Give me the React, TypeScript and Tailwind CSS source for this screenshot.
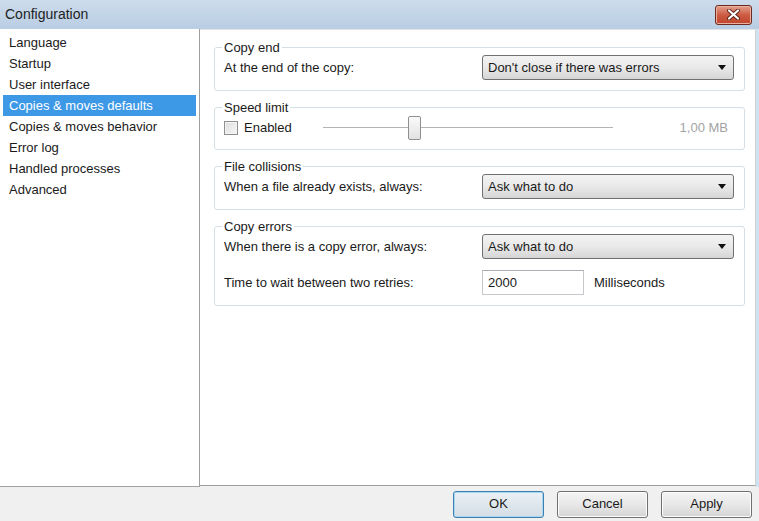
import { ReactNode } from "react";

const sections = [
  "Language",
  "Startup",
  "User interface",
  "Copies & moves defaults",
  "Copies & moves behavior",
  "Error log",
  "Handled processes",
  "Advanced",
];

function GroupBox({ title, children, className = "" }: { title: string; children: ReactNode; className?: string }) {
  return (
    <fieldset className={`rounded-[3px] border border-[#d5dfe5] px-[9px] ${className}`}>
      <legend className="-ml-[2px] px-[2px] leading-[15px]">{title}</legend>
      {children}
    </fieldset>
  );
}

function Combo({ value }: { value: string }) {
  return (
    <div className="flex h-[25px] w-[252px] items-center justify-between rounded-[3px] border border-[#707070] bg-gradient-to-b from-[#f3f3f3] via-[#e9e9e9] to-[#d6d6d6] pl-[5px] pr-[7px]">
      <span>{value}</span>
      <svg width="8" height="5" viewBox="0 0 8 5">
        <path d="M0 0H8L4 5Z" fill="#111" />
      </svg>
    </div>
  );
}

function Button({ label, focused }: { label: string; focused?: boolean }) {
  return (
    <div
      className={`flex h-[27px] w-[91px] items-center justify-center rounded-[3px] border ${
        focused
          ? "border-[#3c7fb1] bg-gradient-to-b from-[#eaf1f6] to-[#d3dde4] shadow-[inset_0_0_0_1px_#a9d6f0]"
          : "border-[#707070] bg-gradient-to-b from-[#f4f4f4] via-[#e8e8e8] to-[#d4d4d4] shadow-[inset_0_0_0_1px_#fcfcfc]"
      }`}
    >
      {label}
    </div>
  );
}

export default function App() {
  return (
    <div className="flex h-[521px] w-[759px] flex-col overflow-hidden bg-[#f0f0f0] font-['Liberation_Sans',Arial,sans-serif] text-[13px] text-[#1a1a1a]">
      {/* title bar */}
      <div className="flex h-[29px] items-center justify-between bg-gradient-to-b from-[#cddcec] to-[#b9cde3] pl-[5px] pr-[7px]">
        <span className="text-[14px] text-[#1e1e1e]">Configuration</span>
        <div className="flex h-[20px] w-[37px] items-center justify-center rounded-[3px] border border-[#6d2a1e] bg-gradient-to-b from-[#e3a08e] via-[#cd5a42] to-[#c0452c] shadow-[inset_0_0_0_1px_#eab0a0]">
          <svg width="13" height="11" viewBox="0 0 13 11">
            <path d="M2 1.5L11 9.5M11 1.5L2 9.5" stroke="#5a2418" strokeWidth="4" strokeLinecap="round" />
            <path d="M2 1.5L11 9.5M11 1.5L2 9.5" stroke="#fff" strokeWidth="2.2" strokeLinecap="round" />
          </svg>
        </div>
      </div>

      <div className="flex h-[458px]">
        {/* section list */}
        <div className="w-[200px] border-r border-b border-[#a0a0a0] bg-white pt-[3px]">
          {sections.map((s, i) => (
            <div
              key={s}
              className={`mx-[3px] h-[21px] pl-[6px] leading-[21px] ${i === 3 ? "bg-[#3d98e6] text-white" : ""}`}
            >
              {s}
            </div>
          ))}
        </div>

        {/* settings panel */}
        <div className="mb-[1px] flex w-[556px] flex-col gap-[9px] border-t border-r border-b border-t-[#e3e3e3] border-r-[#d2d2d2] border-b-[#a0a0a0] bg-white pl-[14px] pr-[10px] pt-[10px]">
          <GroupBox title="Copy end" className="pb-[10px]">
            <div className="flex items-center">
              <span className="w-[258px]">At the end of the copy:</span>
              <Combo value="Don't close if there was errors" />
            </div>
          </GroupBox>

          <GroupBox title="Speed limit" className="pb-[8px]">
            <div className="flex h-[26px] items-center">
              <div className="flex w-[99px] items-center">
                <div className="h-[14px] w-[14px] border border-[#8e8f8f] bg-gradient-to-br from-[#dcdcdc] to-[#f8f8f8] shadow-[inset_0_0_0_1px_#f4f4f4]" />
                <span className="ml-[6px]">Enabled</span>
              </div>
              <div className="relative flex h-[26px] w-[290px] items-center">
                <div className="h-[2px] w-full border-t border-[#b4b4b4] border-b border-b-white" />
                <div className="absolute left-[85px] top-[1px] h-[24px] w-[13px] rounded-[2px] border border-[#8f8f8f] bg-gradient-to-b from-[#fafafa] to-[#e2e2e2]" />
              </div>
              <span className="flex-1 pr-[7px] text-right text-[#a3a3a3]">1,00 MB</span>
            </div>
          </GroupBox>

          <GroupBox title="File collisions" className="pb-[10px]">
            <div className="flex items-center">
              <span className="w-[258px]">When a file already exists, always:</span>
              <Combo value="Ask what to do" />
            </div>
          </GroupBox>

          <GroupBox title="Copy errors" className="pb-[10px]">
            <div className="flex items-center">
              <span className="w-[258px]">When there is a copy error, always:</span>
              <Combo value="Ask what to do" />
            </div>
            <div className="mt-[11px] flex items-center">
              <span className="w-[258px]">Time to wait between two retries:</span>
              <div className="flex h-[25px] w-[102px] items-center border border-[#c6c8cc] border-t-[#abadb3] bg-white pl-[5px]">
                2000
              </div>
              <span className="ml-[10px]">Milliseconds</span>
            </div>
          </GroupBox>
        </div>

        <div className="w-[3px] bg-[#cfe2ef]" />
      </div>

      {/* buttons */}
      <div className="flex h-[34px] items-center justify-end gap-[13px] pr-[7px]">
        <Button label="OK" focused />
        <Button label="Cancel" />
        <Button label="Apply" />
      </div>
    </div>
  );
}
